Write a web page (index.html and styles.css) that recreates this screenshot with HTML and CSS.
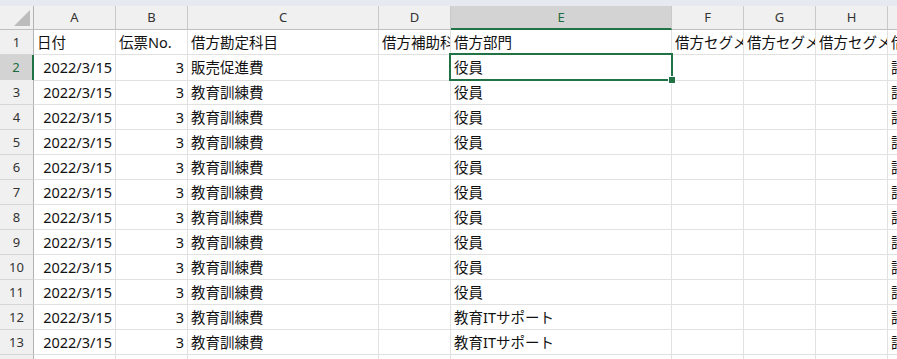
FILE: index.html
```html
<!DOCTYPE html>
<html lang="ja">
<head>
  <meta charset="UTF-8">
  <meta name="viewport" content="width=device-width, initial-scale=1.0">
  <title>仕訳データ</title>
  <link rel="stylesheet" href="styles.css">
</head>
<body>
  <div class="ribbon-edge"></div>

  <div class="sheet">
    <div class="row col-head">
      <div class="corner"><span class="select-all"></span></div>
      <div class="ch">A</div>
      <div class="ch">B</div>
      <div class="ch">C</div>
      <div class="ch">D</div>
      <div class="ch active">E</div>
      <div class="ch">F</div>
      <div class="ch">G</div>
      <div class="ch">H</div>
      <div class="ch">I</div>
    </div>

    <div class="row">
      <div class="rh">1</div>
      <div class="cell">日付</div>
      <div class="cell">伝票No.</div>
      <div class="cell">借方勘定科目</div>
      <div class="cell">借方補助科目</div>
      <div class="cell">借方部門</div>
      <div class="cell">借方セグメント1</div>
      <div class="cell">借方セグメント2</div>
      <div class="cell">借方セグメント3</div>
      <div class="cell">借方税区分</div>
    </div>

    <div class="row">
      <div class="rh active">2</div>
      <div class="cell num">2022/3/15</div>
      <div class="cell num">3</div>
      <div class="cell">販売促進費</div>
      <div class="cell"></div>
      <div class="cell selected">役員<span class="handle"></span></div>
      <div class="cell"></div>
      <div class="cell"></div>
      <div class="cell"></div>
      <div class="cell">諸口</div>
    </div>

    <div class="row">
      <div class="rh">3</div>
      <div class="cell num">2022/3/15</div>
      <div class="cell num">3</div>
      <div class="cell">教育訓練費</div>
      <div class="cell"></div>
      <div class="cell">役員</div>
      <div class="cell"></div>
      <div class="cell"></div>
      <div class="cell"></div>
      <div class="cell">諸口</div>
    </div>

    <div class="row">
      <div class="rh">4</div>
      <div class="cell num">2022/3/15</div>
      <div class="cell num">3</div>
      <div class="cell">教育訓練費</div>
      <div class="cell"></div>
      <div class="cell">役員</div>
      <div class="cell"></div>
      <div class="cell"></div>
      <div class="cell"></div>
      <div class="cell">諸口</div>
    </div>

    <div class="row">
      <div class="rh">5</div>
      <div class="cell num">2022/3/15</div>
      <div class="cell num">3</div>
      <div class="cell">教育訓練費</div>
      <div class="cell"></div>
      <div class="cell">役員</div>
      <div class="cell"></div>
      <div class="cell"></div>
      <div class="cell"></div>
      <div class="cell">諸口</div>
    </div>

    <div class="row">
      <div class="rh">6</div>
      <div class="cell num">2022/3/15</div>
      <div class="cell num">3</div>
      <div class="cell">教育訓練費</div>
      <div class="cell"></div>
      <div class="cell">役員</div>
      <div class="cell"></div>
      <div class="cell"></div>
      <div class="cell"></div>
      <div class="cell">諸口</div>
    </div>

    <div class="row">
      <div class="rh">7</div>
      <div class="cell num">2022/3/15</div>
      <div class="cell num">3</div>
      <div class="cell">教育訓練費</div>
      <div class="cell"></div>
      <div class="cell">役員</div>
      <div class="cell"></div>
      <div class="cell"></div>
      <div class="cell"></div>
      <div class="cell">諸口</div>
    </div>

    <div class="row">
      <div class="rh">8</div>
      <div class="cell num">2022/3/15</div>
      <div class="cell num">3</div>
      <div class="cell">教育訓練費</div>
      <div class="cell"></div>
      <div class="cell">役員</div>
      <div class="cell"></div>
      <div class="cell"></div>
      <div class="cell"></div>
      <div class="cell">諸口</div>
    </div>

    <div class="row">
      <div class="rh">9</div>
      <div class="cell num">2022/3/15</div>
      <div class="cell num">3</div>
      <div class="cell">教育訓練費</div>
      <div class="cell"></div>
      <div class="cell">役員</div>
      <div class="cell"></div>
      <div class="cell"></div>
      <div class="cell"></div>
      <div class="cell">諸口</div>
    </div>

    <div class="row">
      <div class="rh">10</div>
      <div class="cell num">2022/3/15</div>
      <div class="cell num">3</div>
      <div class="cell">教育訓練費</div>
      <div class="cell"></div>
      <div class="cell">役員</div>
      <div class="cell"></div>
      <div class="cell"></div>
      <div class="cell"></div>
      <div class="cell">諸口</div>
    </div>

    <div class="row">
      <div class="rh">11</div>
      <div class="cell num">2022/3/15</div>
      <div class="cell num">3</div>
      <div class="cell">教育訓練費</div>
      <div class="cell"></div>
      <div class="cell">役員</div>
      <div class="cell"></div>
      <div class="cell"></div>
      <div class="cell"></div>
      <div class="cell">諸口</div>
    </div>

    <div class="row">
      <div class="rh">12</div>
      <div class="cell num">2022/3/15</div>
      <div class="cell num">3</div>
      <div class="cell">教育訓練費</div>
      <div class="cell"></div>
      <div class="cell">教育ITサポート</div>
      <div class="cell"></div>
      <div class="cell"></div>
      <div class="cell"></div>
      <div class="cell">諸口</div>
    </div>

    <div class="row">
      <div class="rh">13</div>
      <div class="cell num">2022/3/15</div>
      <div class="cell num">3</div>
      <div class="cell">教育訓練費</div>
      <div class="cell"></div>
      <div class="cell">教育ITサポート</div>
      <div class="cell"></div>
      <div class="cell"></div>
      <div class="cell"></div>
      <div class="cell">諸口</div>
    </div>

    <div class="row">
      <div class="rh">14</div>
      <div class="cell num">2022/3/15</div>
      <div class="cell num">3</div>
      <div class="cell">教育訓練費</div>
      <div class="cell"></div>
      <div class="cell">教育ITサポート</div>
      <div class="cell"></div>
      <div class="cell"></div>
      <div class="cell"></div>
      <div class="cell">諸口</div>
    </div>
  </div>
</body>
</html>
```

FILE: styles.css
```css
body {
  margin: 0;
  overflow: hidden;
  background: #fff;
  font-family: "Noto Sans", "Noto Sans CJK JP", sans-serif;
  color: #111;
}

.ribbon-edge {
  height: 6px;
  background: #e6e9ef;
}

.sheet {
  width: 897px;
  overflow: hidden;
}

.row {
  display: grid;
  grid-template-columns: 34px 82px 72px 191px 72px 221px 72px 72px 72px 110px;
  width: 998px;
  height: 25px;
}
.row > div {
  box-sizing: border-box;
  min-width: 0;
}

/* column letters */
.col-head {
  height: 24px;
  background: #f0f0f0;
}
.ch {
  border-right: 1px solid #c9c9c9;
  border-bottom: 1px solid #bfbfbf;
  font-size: 13px;
  line-height: 22px;
  text-align: center;
  color: #333;
  overflow: hidden;
}
.ch.active {
  background: #d3d3d3;
  color: #1d6b40;
  border-bottom: 2px solid #217346;
}
.corner {
  border-right: 1px solid #b3b3b3;
  border-bottom: 1px solid #bfbfbf;
  display: flex;
  justify-content: flex-end;
  align-items: flex-end;
  padding: 0 3px 3px 0;
}
.select-all {
  width: 16px;
  height: 16px;
  background: #bcbcbc;
  clip-path: polygon(100% 0, 100% 100%, 0 100%);
}

/* row numbers */
.rh {
  background: #f0f0f0;
  border-right: 1px solid #b3b3b3;
  border-bottom: 1px solid #d6d6d6;
  font-size: 13px;
  line-height: 24px;
  text-align: center;
  color: #333;
}
.rh.active {
  background: #d3d3d3;
  color: #1d6b40;
  border-right: 2px solid #217346;
}

/* cells */
.cell {
  border-right: 1px solid #e1e1e1;
  border-bottom: 1px solid #e1e1e1;
  padding: 0 3px;
  font-size: 14.5px;
  line-height: 25px;
  white-space: nowrap;
  overflow: hidden;
}
.cell.num {
  text-align: right;
}
.cell.selected {
  position: relative;
  overflow: visible;
}
.cell.selected::before {
  content: "";
  position: absolute;
  left: -2px;
  top: -2px;
  width: 224px;
  height: 28px;
  box-sizing: border-box;
  border: 2px solid #217346;
}
.handle {
  position: absolute;
  left: 217px;
  top: 21px;
  width: 6px;
  height: 6px;
  background: #217346;
  border: 1px solid #fff;
}
```
